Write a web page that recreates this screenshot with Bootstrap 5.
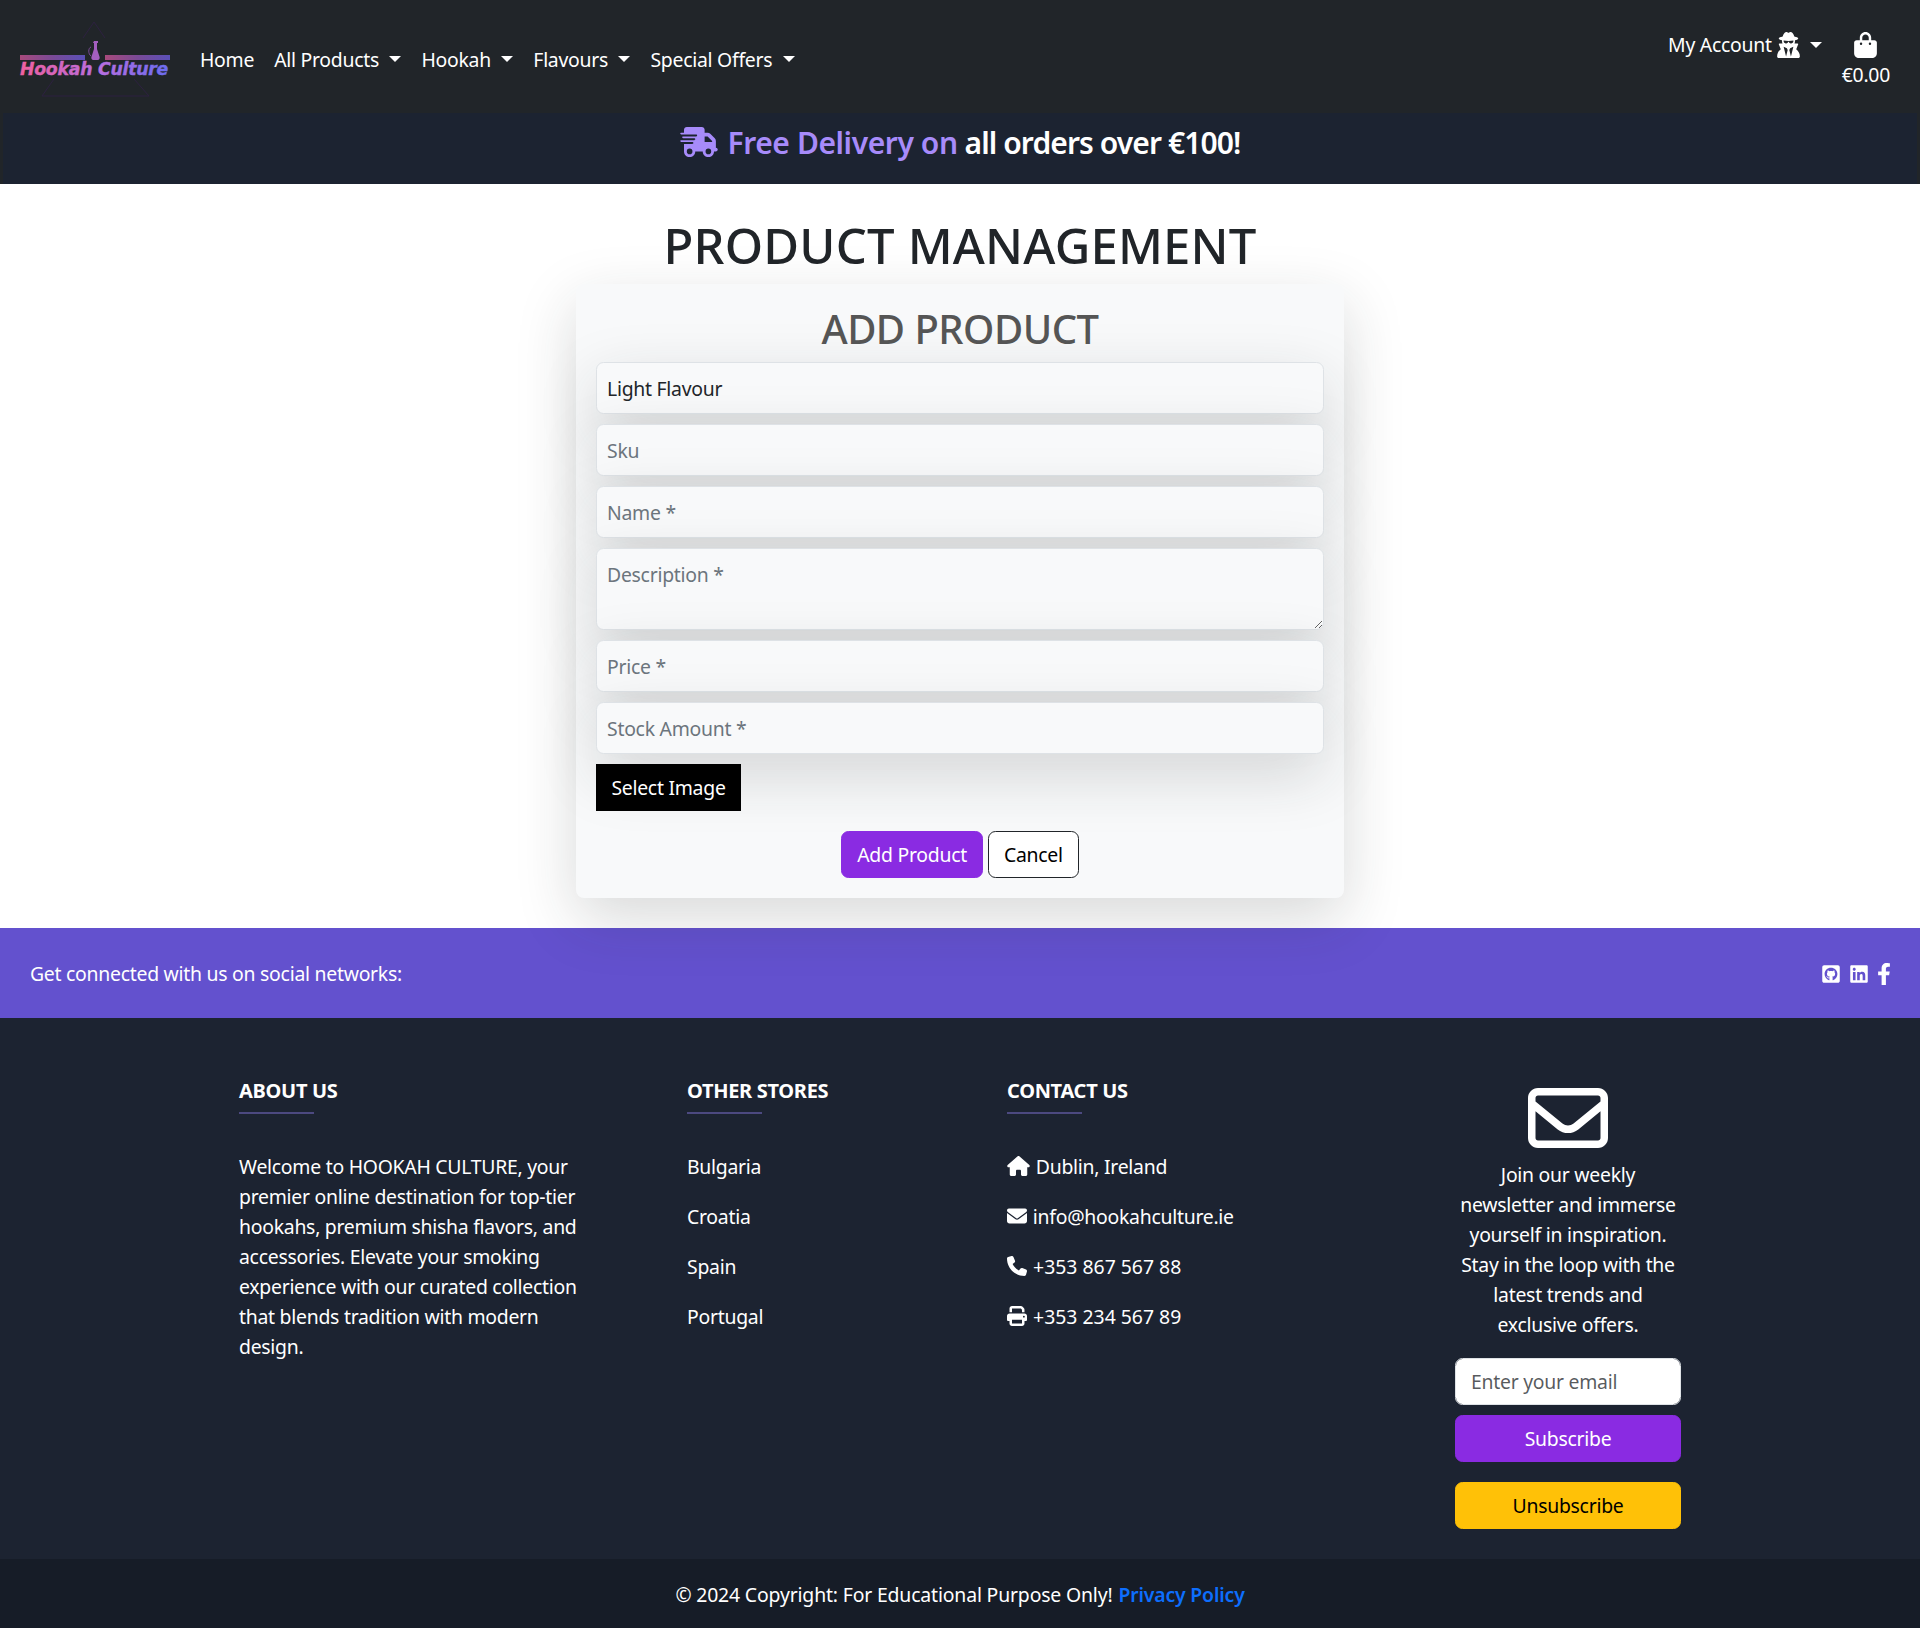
<!DOCTYPE html>
<html lang="en">
<head>
  <meta charset="UTF-8" />
  <title>Product Management</title>
  <meta name="viewport" content="width=device-width, initial-scale=1">
  <link href="https://cdn.jsdelivr.net/npm/bootstrap@5.3.0/dist/css/bootstrap.min.css" rel="stylesheet">
  <style>
    html { font-size: 20px; }
    body { font-family: "Noto Sans", "Liberation Sans", sans-serif; font-size: 19.4px; letter-spacing: -.0134em; background: #fff; }
    button, input, textarea { letter-spacing: inherit; }
    .btn, .form-control { font-size: 19.4px; white-space: nowrap; }
    textarea.form-control { white-space: normal; }
    .ico { fill: currentColor; display: inline-block; }

    .top-nav { height: 113px; padding: 0 30px 0 19px; align-items: flex-start; flex-wrap: nowrap; }
    .brand-logo { width: 152px; height: 86px; margin: 19px 19px 0 0; display: block; overflow: visible; }
    .top-links { margin-top: 39px; gap: 0; }
    .top-links .nav-link { color: #fff; padding: 6px 10px; line-height: 30px; }
    .top-links .dropdown-toggle::after, .acct-link::after { border-top-width: .34em; border-left-width: .34em; border-right-width: .34em; }
    .top-links .dropdown-toggle::after { margin-left: 10.4px; }
    .acct-link { color: #fff; text-decoration: none; line-height: 30px; display: flex; align-items: center; gap: 5px; margin-top: 30px; }
    .acct-link::after { margin-left: 5px; }
    .cart-link { color: #fff; text-decoration: none; line-height: 30px; text-align: center; margin: 32px 0 0 20px; }
    .cart-link svg { display: block; margin: 0 auto 2px; }

    .promo-bar { background: #1c2331; height: 71px; margin: 0 3px; padding-bottom: 13px; font-size: 30px; font-weight: 600; letter-spacing: -.03em; color: #fff; }
    .promo-bar .accent { color: #a78bfa; letter-spacing: -.014em; }

    .page-title { font-size: 49px; font-weight: 500; color: #212529; line-height: 1.2; margin: 32px 0 9px; letter-spacing: .004em; }
    .form-panel { width: 768px; height: 614px; padding: 21px 20px; background: #f8f9fa; border-radius: 8px; }
    .form-panel h3 { font-size: 40px; font-weight: 500; color: #555; line-height: 1.2; margin: 0 0 9px; text-align: center; letter-spacing: -.013em; }
    .panel-input { height: 52px; background: #f8f9fa; margin-bottom: 10px; padding: 2px 10px 0; }
    textarea.panel-input { height: 82px; padding-top: 11px; }
    .panel-input::placeholder { color: #6c757d; }
    .btn-pick { background: #000; color: #fff; border-radius: 0; border: 0; width: 145px; height: 47px; }
    .btn-purple { background: #8a2be2; color: #fff; border-color: #8a2be2; }
    .form-actions { margin-top: 20px; gap: 5px; }
    .form-actions .btn { height: 47px; }
    .btn-cancel { background: #fff; border: 1px solid #212529; color: #000; }

    .social-strip { background: #6351ce; height: 90px; margin-top: 30px; padding: 2px 30px 0; color: #fff; }
    .social-icons { gap: 10px; }

    .site-foot { background: #1c2331; color: #fff; height: 541px; padding: 58px 0 0 239px; display: grid; grid-template-columns: 448px 320px 448px 226px; }
    .site-foot h6 { font-size: 20px; font-weight: 700; line-height: 30px; margin: 0; text-transform: uppercase; letter-spacing: -.015em; }
    .foot-rule { width: 75px; height: 2px; background: #7c6fd0; opacity: .5; margin: 6px 0 38px; }
    .about-text { width: 345px; margin: 0; line-height: 30px; }
    .foot-list { list-style: none; padding: 0; margin: 0; }
    .foot-list li { line-height: 30px; margin-bottom: 20px; }
    .foot-list svg { vertical-align: -2px; margin-right: 1px; }
    .foot-list .tel-line { letter-spacing: 0; }
    .news-col { text-align: center; padding-top: 12px; }
    .news-col p { line-height: 30px; margin: 12px 0 18px; }
    .news-col .form-control { height: 47px; margin-bottom: 10px; }
    .news-col .btn { height: 47px; width: 100%; display: block; }
    .btn-unsub { background: #ffc107; color: #000; margin-top: 20px; border-color: #ffc107; }

    .copy-bar { background: #161c27; height: 69px; color: #fff; padding-top: 3px; letter-spacing: -.008em; }
    .copy-bar a { color: #0d6efd; font-weight: 600; text-decoration: none; margin-left: 1px; }
  </style>
</head>
<body>

  <nav class="navbar navbar-expand-lg navbar-dark bg-dark top-nav">
    <a href="#" class="d-block">
      <svg class="brand-logo" viewBox="0 -10 152 86">
        <defs>
          <linearGradient id="logoGrad" x1="0" x2="1" y1="0" y2="0">
            <stop offset="0" stop-color="#f0609f"/>
            <stop offset=".55" stop-color="#b56ee0"/>
            <stop offset="1" stop-color="#6a6cf0"/>
          </linearGradient>
          <linearGradient id="lineGrad" x1="0" x2="1" y1="0" y2="0">
            <stop offset="0" stop-color="#a84a7c"/>
            <stop offset=".5" stop-color="#7a4a96"/>
            <stop offset="1" stop-color="#5a50b8"/>
          </linearGradient>
        </defs>
        <path d="M75 -7 L64 9 M75 -7 L86 9 M23 67 L35 50 M130 67 L115 50 M23 67 H130" stroke="#2d2140" stroke-width="1" fill="none"/>
        <rect x="1" y="26" width="65" height="5" fill="url(#lineGrad)"/>
        <rect x="86" y="26" width="65" height="5" fill="url(#lineGrad)"/>
        <path d="M75 12h4v2h-1v6l2.600 8c.4 1.500-.4 3-1.900 3h-4.400c-1.500 0-2.300-1.500-1.900-3l2.600-8v-6h-1z" fill="#a45fc0"/>
        <path d="M72 18c-3 1-3 7 0 9" stroke="#7a4a96" fill="none"/>
        <text x="1" y="46" font-family="DejaVu Sans" font-weight="700" font-style="italic" font-size="17.500" textLength="148" lengthAdjust="spacingAndGlyphs" fill="url(#logoGrad)" stroke="url(#logoGrad)" stroke-width=".4">Hookah Culture</text>
      </svg>
    </a>
    <ul class="navbar-nav top-links">
      <li class="nav-item"><a class="nav-link" href="#">Home</a></li>
      <li class="nav-item"><a class="nav-link dropdown-toggle" href="#">All Products</a></li>
      <li class="nav-item"><a class="nav-link dropdown-toggle" href="#">Hookah</a></li>
      <li class="nav-item"><a class="nav-link dropdown-toggle" href="#">Flavours</a></li>
      <li class="nav-item"><a class="nav-link dropdown-toggle" href="#">Special Offers</a></li>
    </ul>
    <div class="ms-auto d-flex align-items-start">
      <a href="#" class="acct-link dropdown-toggle">My Account
        <svg class="ico" width="23" height="26" viewBox="0 0 448 512"><path d="M224 16c-6.700 0-10.800-2.800-15.500-6.100C201.900 5.400 194 0 176 0c-30.500 0-52 43.700-66 89.400C62.700 98.100 32 112.200 32 128c0 14.300 25 27.100 64.600 35.900c-.4 4-.6 8-.6 12.100c0 17 3.300 33.200 9.300 48H45.400C38 224 32 230 32 237.400c0 1.700 .3 3.400 1 5l38.800 96.900C28.200 371.800 0 423.800 0 482.300C0 498.700 13.300 512 29.700 512H418.300c16.400 0 29.700-13.300 29.700-29.700c0-58.500-28.200-110.400-71.700-143L415 242.400c.6-1.600 1-3.300 1-5c0-7.400-6-13.400-13.400-13.400H342.700c6-14.800 9.300-31 9.300-48c0-4.100-.2-8.100-.6-12.100C391 155.100 416 142.300 416 128c0-15.800-30.700-29.900-78-38.600C324 43.700 302.500 0 272 0c-18 0-25.900 5.400-32.500 9.900c-4.800 3.300-8.800 6.100-15.500 6.100zm56 208H267.600c-16.500 0-31.100-10.600-36.300-26.200c-2.300-7-12.200-7-14.500 0c-5.200 15.600-19.900 26.200-36.300 26.200H168c-22.100 0-40-17.900-40-40V169.600c28.200 4.100 61 6.400 96 6.400s67.800-2.300 96-6.400V184c0 22.100-17.900 40-40 40zm-88 96l16 32L176 480 128 288l64 32zm128-32L272 480 240 352l16-32 64-32z"/></svg>
      </a>
      <a href="#" class="cart-link">
        <svg class="ico" width="23" height="26" viewBox="0 0 448 512"><path d="M160 112c0-35.300 28.700-64 64-64s64 28.700 64 64v48H160V112zm-48 48H48c-26.500 0-48 21.500-48 48V416c0 53 43 96 96 96H352c53 0 96-43 96-96V208c0-26.500-21.500-48-48-48H336V112C336 50.100 285.900 0 224 0S112 50.100 112 112v48zm24 48a24 24 0 1 1 0 48 24 24 0 1 1 0-48zm152 24a24 24 0 1 1 48 0 24 24 0 1 1 -48 0z"/></svg>
        <span class="d-block">€0.00</span>
      </a>
    </div>
  </nav>

  <div class="bg-dark">
    <div class="promo-bar d-flex align-items-center justify-content-center gap-2">
      <svg class="ico accent" width="38" height="30" viewBox="0 0 640 512"><path d="M112 0C85.500 0 64 21.500 64 48V96H16c-8.800 0-16 7.200-16 16s7.200 16 16 16H64 272c8.800 0 16 7.200 16 16s-7.200 16-16 16H64 48c-8.800 0-16 7.200-16 16s7.200 16 16 16H64 240c8.800 0 16 7.200 16 16s-7.200 16-16 16H64 16c-8.800 0-16 7.200-16 16s7.200 16 16 16H64 208c8.800 0 16 7.200 16 16s-7.200 16-16 16H64V416c0 53 43 96 96 96s96-43 96-96H384c0 53 43 96 96 96s96-43 96-96h32c17.700 0 32-14.300 32-32s-14.300-32-32-32V288 256 237.300c0-17-6.700-33.300-18.700-45.300L512 114.700c-12-12-28.300-18.700-45.300-18.700H416V48c0-26.500-21.500-48-48-48H112zM544 237.300V256H416V160h50.700L544 237.300zM160 368a48 48 0 1 1 0 96 48 48 0 1 1 0-96zm272 48a48 48 0 1 1 96 0 48 48 0 1 1 -96 0z"/></svg>
      <span><span class="accent">Free Delivery on</span> all orders over €100!</span>
    </div>
  </div>

  <main class="d-flex flex-column align-items-center">
    <h1 class="page-title">PRODUCT MANAGEMENT</h1>
    <form class="form-panel shadow-lg">
      <h3>ADD PRODUCT</h3>
      <input class="form-control panel-input shadow-lg" value="Light Flavour">
      <input class="form-control panel-input shadow-lg" placeholder="Sku">
      <input class="form-control panel-input shadow-lg" placeholder="Name *">
      <textarea class="form-control panel-input shadow-lg" placeholder="Description *"></textarea>
      <input class="form-control panel-input shadow-lg" placeholder="Price *">
      <input class="form-control panel-input shadow-lg" placeholder="Stock Amount *">
      <button type="button" class="btn btn-pick d-block">Select Image</button>
      <div class="d-flex justify-content-center form-actions">
        <button type="button" class="btn btn-purple">Add Product</button>
        <button type="button" class="btn btn-cancel">Cancel</button>
      </div>
    </form>
  </main>

  <div class="social-strip d-flex align-items-center justify-content-between">
    <span>Get connected with us on social networks:</span>
    <div class="d-flex align-items-center social-icons">
      <svg class="ico" width="18" height="20" viewBox="0 0 448 512"><path d="M400 32H48C21.500 32 0 53.500 0 80v352c0 26.500 21.500 48 48 48h352c26.500 0 48-21.500 48-48V80c0-26.500-21.500-48-48-48zM277.300 415.700c-8.400 1.500-11.500-3.700-11.500-8 0-5.400.2-33 .2-55.300 0-15.600-5.200-25.500-11.300-30.700 37-4.100 76-9.200 76-73.100 0-18.200-6.500-27.300-17.100-39 1.700-4.300 7.400-22-1.700-45-13.900-4.300-45.700 17.900-45.700 17.900-13.200-3.700-27.500-5.600-41.600-5.600-14.100 0-28.400 1.900-41.600 5.600 0 0-31.800-22.200-45.700-17.900-9.100 22.900-3.500 40.600-1.700 45-10.600 11.700-15.600 20.800-15.600 39 0 63.600 37.300 69 74.300 73.100-4.800 4.300-9.100 11.700-10.600 22.300-9.500 4.300-33.800 11.700-48.300-13.900-9.100-15.800-25.500-17.100-25.500-17.100-16.200-.2-1.100 10.200-1.100 10.200 10.800 5 18.400 24.200 18.400 24.200 9.700 29.700 56.100 19.700 56.100 19.700 0 13.900.2 36.500.2 40.600 0 4.300-3 9.500-11.500 8-66-22.100-112.200-84.900-112.200-158.300 0-91.800 70.200-161.500 162-161.500S388 165.600 388 257.400c.1 73.400-44.700 136.300-110.700 158.300z"/></svg>
      <svg class="ico" width="18" height="20" viewBox="0 0 448 512"><path d="M416 32H31.900C14.300 32 0 46.500 0 64.300v383.400C0 465.500 14.300 480 31.900 480H416c17.600 0 32-14.500 32-32.300V64.300c0-17.800-14.400-32.300-32-32.300zM135.400 416H69V202.200h66.500V416zm-33.200-243c-21.300 0-38.500-17.300-38.500-38.500S80.900 96 102.200 96c21.200 0 38.500 17.300 38.500 38.500 0 21.300-17.200 38.500-38.500 38.500zm282.100 243h-66.400V312c0-24.800-.5-56.700-34.500-56.700-34.600 0-39.900 27-39.900 54.900V416h-66.400V202.200h63.700v29.200h.9c8.900-16.800 30.600-34.500 62.900-34.500 67.200 0 79.700 44.300 79.700 101.900V416z"/></svg>
      <svg class="ico" width="12" height="22" viewBox="20 0 280 512"><path d="M279.140 288l14.220-92.660h-88.910v-60.130c0-25.350 12.420-50.060 52.240-50.060h40.420V6.260S260.430 0 225.360 0c-73.220 0-121.080 44.380-121.080 124.720v70.620H22.890V288h81.390v224h100.170V288z"/></svg>
    </div>
  </div>

  <footer class="site-foot">
    <div>
      <h6>About us</h6>
      <div class="foot-rule"></div>
      <p class="about-text">Welcome to HOOKAH CULTURE, your premier online destination for top-tier hookahs, premium shisha flavors, and accessories. Elevate your smoking experience with our curated collection that blends tradition with modern design.</p>
    </div>
    <div>
      <h6>Other Stores</h6>
      <div class="foot-rule"></div>
      <ul class="foot-list">
        <li>Bulgaria</li>
        <li>Croatia</li>
        <li>Spain</li>
        <li>Portugal</li>
      </ul>
    </div>
    <div>
      <h6>Contact us</h6>
      <div class="foot-rule"></div>
      <ul class="foot-list">
        <li><svg class="ico" width="23" height="20" viewBox="0 0 576 512"><path d="M575.800 255.500c0 18-15 32.100-32 32.100h-32l.7 160.200c0 2.700-.2 5.400-.5 8.100V472c0 22.100-17.900 40-40 40H456c-1.100 0-2.200 0-3.300-.1c-1.400 .1-2.800 .1-4.200 .1H416 392c-22.100 0-40-17.900-40-40V448 384c0-17.700-14.300-32-32-32H256c-17.700 0-32 14.300-32 32v64 24c0 22.100-17.900 40-40 40H160 128.100c-1.500 0-3-.1-4.500-.2c-1.200 .1-2.400 .2-3.600 .2H104c-22.100 0-40-17.900-40-40V360c0-.9 0-1.900 .1-2.800V287.600H32c-18 0-32-14-32-32.100c0-9 3-17 10-24L266.400 8c7-7 15-8 22-8s15 2 21 7L564.800 231.500c8 7 12 15 11 24z"/></svg> Dublin, Ireland</li>
        <li><svg class="ico" width="20" height="20" viewBox="0 0 512 512"><path d="M48 64C21.500 64 0 85.500 0 112c0 15.100 7.100 29.300 19.200 38.400L236.800 313.600c11.400 8.500 27 8.500 38.400 0L492.800 150.400c12.100-9.100 19.200-23.300 19.200-38.400c0-26.500-21.500-48-48-48H48zM0 176V384c0 35.300 28.700 64 64 64H448c35.300 0 64-28.700 64-64V176L294.400 339.200c-22.800 17.100-54 17.100-76.800 0L0 176z"/></svg> info@hookahculture.ie</li>
        <li class="tel-line"><svg class="ico" width="20" height="20" viewBox="0 0 512 512"><path d="M164.900 24.600c-7.700-18.600-28-28.500-47.400-23.200l-88 24C12.100 30.200 0 46 0 64C0 311.400 200.600 512 448 512c18 0 33.800-12.100 38.600-29.500l24-88c5.300-19.400-4.600-39.700-23.200-47.400l-96-40c-16.300-6.800-35.200-2.100-46.300 11.600L304.700 368C234.300 334.700 177.300 277.700 144 207.300L193.300 167c13.700-11.200 18.400-30 11.600-46.300l-40-96z"/></svg> +353 867 567 88</li>
        <li class="tel-line"><svg class="ico" width="20" height="20" viewBox="0 0 512 512"><path d="M128 0C92.700 0 64 28.700 64 64v96h64V64H354.700L384 93.300V160h64V93.300c0-17-6.700-33.300-18.700-45.300L400 18.700C388 6.700 371.700 0 354.700 0H128zM384 352v32 64H128V384 368 352H384zm64 32h32c17.700 0 32-14.300 32-32V256c0-35.300-28.700-64-64-64H64c-35.300 0-64 28.700-64 64v96c0 17.700 14.300 32 32 32H64v64c0 35.300 28.700 64 64 64H384c35.300 0 64-28.700 64-64V384zM432 248a24 24 0 1 1 0 48 24 24 0 1 1 0-48z"/></svg> +353 234 567 89</li>
      </ul>
    </div>
    <div class="news-col">
      <svg class="ico d-block mx-auto" width="80" height="80" viewBox="0 0 512 512" style="margin-top:-10px;margin-bottom:-10px"><path d="M64 112c-8.800 0-16 7.200-16 16v22.100L220.500 291.700c20.700 17 50.400 17 71.100 0L464 150.100V128c0-8.800-7.200-16-16-16H64zM48 212.200V384c0 8.800 7.200 16 16 16H448c8.800 0 16-7.200 16-16V212.200L322 328.800c-38.400 31.500-93.700 31.500-132 0L48 212.200zM0 128C0 92.700 28.700 64 64 64H448c35.300 0 64 28.700 64 64V384c0 35.300-28.700 64-64 64H64c-35.300 0-64-28.700-64-64V128z"/></svg>
      <p>Join our weekly newsletter and immerse yourself in inspiration. Stay in the loop with the latest trends and exclusive offers.</p>
      <input class="form-control" placeholder="Enter your email">
      <button type="button" class="btn btn-purple">Subscribe</button>
      <button type="button" class="btn btn-unsub">Unsubscribe</button>
    </div>
  </footer>

  <div class="copy-bar d-flex align-items-center justify-content-center">
    <span>© 2024 Copyright: For Educational Purpose Only! <a href="#">Privacy Policy</a></span>
  </div>

  <script src="https://cdn.jsdelivr.net/npm/bootstrap@5.3.0/dist/js/bootstrap.bundle.min.js"></script>
</body>
</html>
